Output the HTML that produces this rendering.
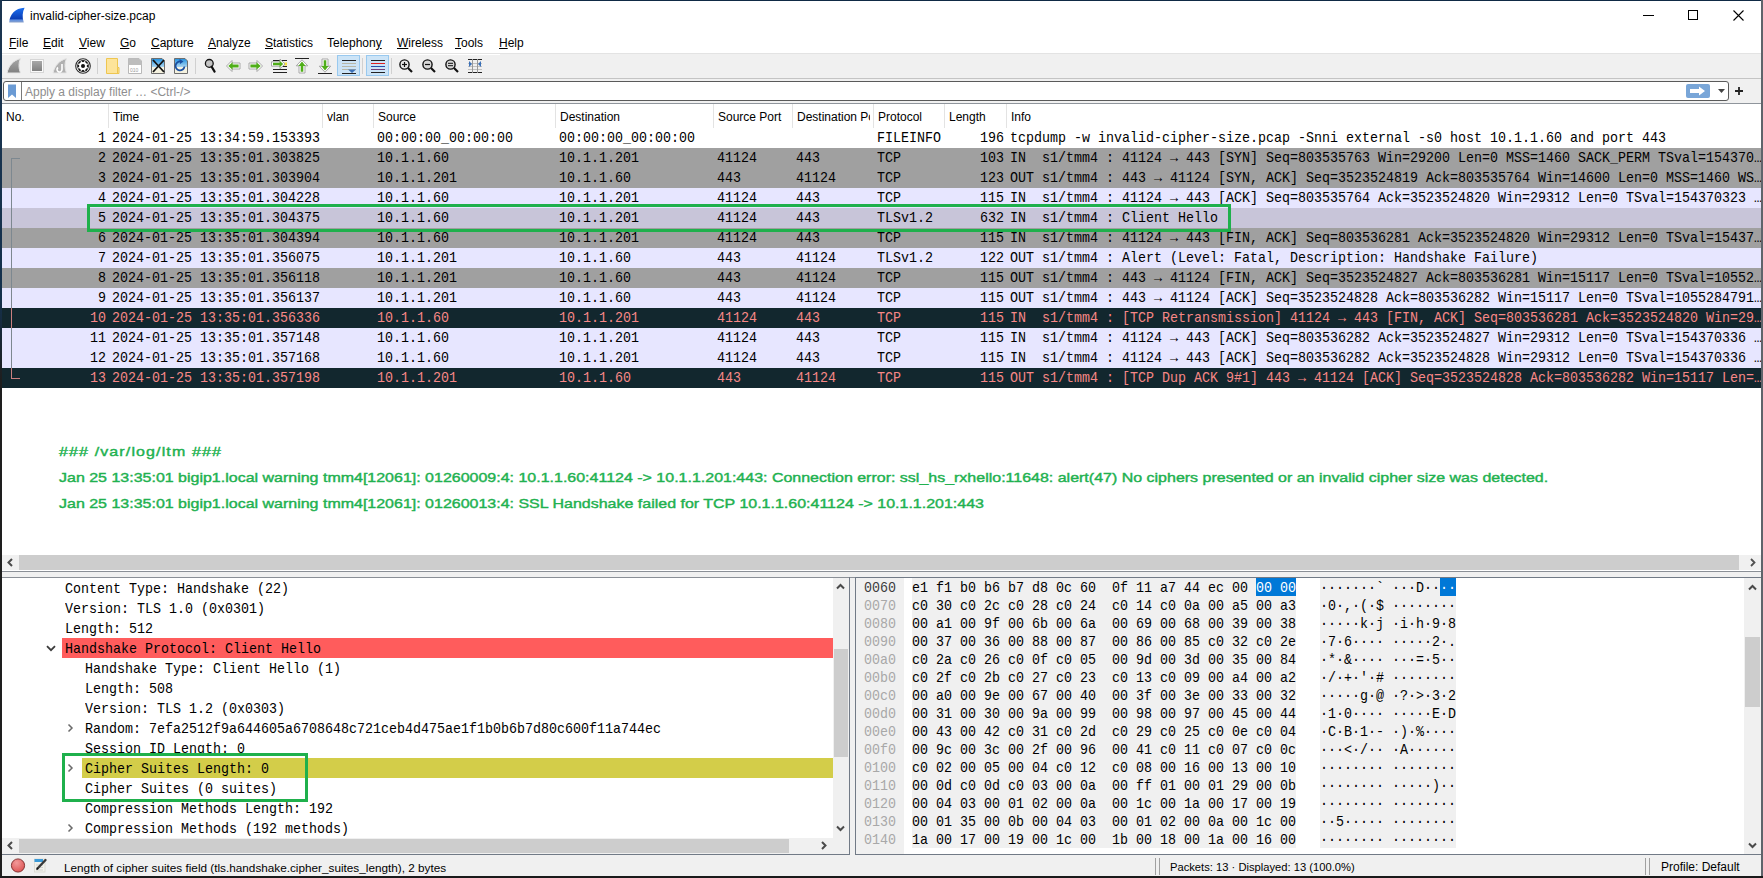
<!DOCTYPE html>
<html><head><meta charset="utf-8">
<style>
*{margin:0;padding:0;box-sizing:border-box}
html,body{width:1763px;height:878px;overflow:hidden;background:#fff}
body{position:relative;font-family:"Liberation Sans",sans-serif;font-size:12px;color:#000}
.a{position:absolute}
.m{font-family:"Liberation Mono",monospace;font-size:15px;white-space:pre;transform:scaleX(0.88889);transform-origin:0 0}
.s{font-family:"Liberation Sans",sans-serif;font-size:12px;white-space:pre}
#bl{left:0;top:0;width:2px;height:878px;background:linear-gradient(#1b3550 0,#14304c 300px,#1e1e1e 380px,#1e1e1e 878px)}
#br{left:1761px;top:0;width:2px;height:878px;background:#5f646b}
#bt{left:0;top:0;width:1763px;height:1px;background:#0f2a45}
#bb{left:0;top:876px;width:1763px;height:2px;background:#1a1a1a}
/* menu */
.mi{top:35px;height:16px;line-height:16px}
.mi u{text-decoration:underline;text-underline-offset:1px}
#tb{left:2px;top:53px;width:1759px;height:26px;background:#f0f0f0;border-top:1px solid #e3e3e3;border-bottom:1px solid #c4c4c4}
#fb{left:2px;top:79px;width:1759px;height:24px;background:#f0f0f0}
/* packet list */
#pl{left:2px;top:103px;width:1759px;height:452px;background:#fff;border-top:1px solid #8f959c}
.hd{top:105px;height:23px;line-height:23px;padding-top:1px}
.hsep{top:104px;width:1px;height:24px;background:#e3e3e3}
.row{left:2px;width:1759px;height:20px}
.rt{height:20px;line-height:20px;top:0;margin-top:1px}
.gry{background:#a0a0a0}
.lav{background:#e7e6ff}
.sel{background:#c8c5d9}
.drk{background:#12272e;color:#f78787}
.drk .rt{color:#f78787}
.dt .rt{margin-top:2px}
.hx{height:18px;line-height:18px;color:#000;margin-top:2px}
.lg{font-family:"Liberation Sans",sans-serif;font-weight:normal;-webkit-text-stroke:0.4px #21b14f;font-size:13px;color:#21b14f;white-space:pre;line-height:16px}
</style></head><body>
<div class="a" id="bt"></div>
<!-- title -->
<svg class="a" style="left:0;top:0" width="30" height="30" viewBox="0 0 30 30">
<defs><linearGradient id="sg" x1="0" y1="0" x2="0" y2="1"><stop offset="0" stop-color="#1a6ff0"/><stop offset="0.75" stop-color="#0a3db5"/><stop offset="0.82" stop-color="#5f8fe0"/><stop offset="1" stop-color="#8aa0c8"/></linearGradient></defs>
<path d="M9.2 22.6 C9.6 14.5 15 8.2 24.6 7.8 C22.4 12 22 17 23.8 22.6 Z" fill="url(#sg)"/>
</svg>
<div class="a s" style="left:30px;top:8px;line-height:16px">invalid-cipher-size.pcap</div>
<div class="a" style="left:1643px;top:15px;width:11px;height:1px;background:#000"></div>
<div class="a" style="left:1688px;top:10px;width:10px;height:10px;border:1px solid #000"></div>
<svg class="a" style="left:1733px;top:10px" width="11" height="11" viewBox="0 0 11 11"><path d="M0.5 0.5L10.5 10.5M10.5 0.5L0.5 10.5" stroke="#000" stroke-width="1.1"/></svg>
<!-- menu -->
<div class="a s mi" style="left:9px"><u>F</u>ile</div>
<div class="a s mi" style="left:43px"><u>E</u>dit</div>
<div class="a s mi" style="left:79px"><u>V</u>iew</div>
<div class="a s mi" style="left:120px"><u>G</u>o</div>
<div class="a s mi" style="left:151px"><u>C</u>apture</div>
<div class="a s mi" style="left:208px"><u>A</u>nalyze</div>
<div class="a s mi" style="left:265px"><u>S</u>tatistics</div>
<div class="a s mi" style="left:327px">Telephon<u>y</u></div>
<div class="a s mi" style="left:397px"><u>W</u>ireless</div>
<div class="a s mi" style="left:455px"><u>T</u>ools</div>
<div class="a s mi" style="left:499px"><u>H</u>elp</div>
<div class="a" id="tb"></div>
<!--TOOLBAR-->
<svg class="a" style="left:0;top:52px" width="500" height="27" viewBox="0 52 500 27">
<defs>
<linearGradient id="gg" x1="0" y1="0" x2="0" y2="1"><stop offset="0" stop-color="#a8a8a8"/><stop offset="1" stop-color="#808080"/></linearGradient>
<linearGradient id="bg1" x1="0" y1="0" x2="0" y2="1"><stop offset="0" stop-color="#1d8fe0"/><stop offset="0.55" stop-color="#a8d4f0"/><stop offset="0.6" stop-color="#f6f4e4"/><stop offset="1" stop-color="#f3f0dc"/></linearGradient>
</defs>
<line x1="2" y1="54.5" x2="500" y2="54.5" stroke="#fff" stroke-width="1"/>
<!-- 1 shark fin disabled -->
<path d="M7 73 C8.5 66 13 60.5 20.5 58.5 C18.5 63 18.5 68 20.5 73 Z" fill="url(#gg)" stroke="#e6e6e6" stroke-width="1"/>
<!-- 2 stop -->
<rect x="30.5" y="59.5" width="13" height="13" fill="#fafafa" stroke="#d6d6d6"/>
<rect x="32" y="61" width="10" height="10" fill="url(#gg)"/>
<!-- 3 restart -->
<path d="M53 73 C54.5 66 59 60.5 66.5 58.5 C64.5 63 64.5 68 66.5 73 Z" fill="#b0b0b0" stroke="#e6e6e6" stroke-width="1"/>
<path d="M62 64 L62 69.5 A2.5 2.5 0 1 1 58 67.5" fill="none" stroke="#fff" stroke-width="1.6"/>
<!-- 4 gear -->
<circle cx="83" cy="66" r="7.3" fill="#fff" stroke="#2a2a2a" stroke-width="1.1"/>
<circle cx="83" cy="66" r="5.9" fill="#151515"/>
<circle cx="83" cy="66" r="3.9" fill="#fff"/>
<rect x="82.2" y="61.0" width="1.6" height="2" fill="#fff" transform="rotate(22.5 83 66)"/><rect x="82.2" y="61.0" width="1.6" height="2" fill="#fff" transform="rotate(67.5 83 66)"/><rect x="82.2" y="61.0" width="1.6" height="2" fill="#fff" transform="rotate(112.5 83 66)"/><rect x="82.2" y="61.0" width="1.6" height="2" fill="#fff" transform="rotate(157.5 83 66)"/><rect x="82.2" y="61.0" width="1.6" height="2" fill="#fff" transform="rotate(202.5 83 66)"/><rect x="82.2" y="61.0" width="1.6" height="2" fill="#fff" transform="rotate(247.5 83 66)"/><rect x="82.2" y="61.0" width="1.6" height="2" fill="#fff" transform="rotate(292.5 83 66)"/><rect x="82.2" y="61.0" width="1.6" height="2" fill="#fff" transform="rotate(337.5 83 66)"/>
<circle cx="83" cy="66" r="2.0" fill="#111"/>
<line x1="97.5" y1="58" x2="97.5" y2="74" stroke="#d0d0d0"/>
<!-- 6 folder -->
<path d="M106.5 58.5 H117.5 V67.5 H119 V73.5 H106.5 Z" fill="#fde49a" stroke="#eec650" stroke-width="1"/>
<line x1="117.5" y1="67.5" x2="117.5" y2="73.5" stroke="#eec650"/>
<!-- 7 save disabled -->
<path d="M128.5 58.5 H139 L141.5 61 V73.5 H128.5 Z" fill="#fff" stroke="#b8b8b8"/>
<path d="M128.5 58.5 H139 L141.5 61 V65 H128.5 Z" fill="#bdbdbd"/>
<text x="130" y="71.5" font-family="Liberation Sans" font-size="5" fill="#9a9a9a">010</text>
<!-- 8 close -->
<path d="M151.5 58.5 H162 L164.5 61 V73.5 H151.5 Z" fill="url(#bg1)" stroke="#6e6e6e"/>
<path d="M153 60 L164 72 M164 60 L153 72" stroke="#111" stroke-width="1.8"/>
<!-- 9 reload -->
<path d="M174.5 58.5 H185 L187.5 61 V73.5 H174.5 Z" fill="url(#bg1)" stroke="#6e6e6e"/>
<path d="M184.5 66.5 A4.5 4.5 0 1 1 181 61.5" fill="none" stroke="#1a4ea0" stroke-width="1.8"/>
<path d="M179.5 59 L183.5 61.5 L180 64 Z" fill="#1a4ea0"/>
<line x1="195.5" y1="58" x2="195.5" y2="74" stroke="#d0d0d0"/>
<!-- 11 find -->
<circle cx="209.3" cy="63.4" r="3.9" fill="#c4c4c4" stroke="#111" stroke-width="1.3"/>
<line x1="211.6" y1="66.6" x2="214.6" y2="71.6" stroke="#111" stroke-width="2.2" stroke-linecap="round"/>
<!-- 12 back -->
<path d="M226.5 66 L232 60.5 V63 H240 V69 H232 V71.5 Z" fill="#fff" stroke="#a8a8a8" stroke-width="1"/>
<path d="M228.3 66 L232.6 62.2 V64.5 H238.6 V67.5 H232.6 V69.8 Z" fill="#4fae18"/>
<!-- 13 fwd -->
<path d="M262.5 66 L257 60.5 V63 H249 V69 H257 V71.5 Z" fill="#fff" stroke="#a8a8a8" stroke-width="1"/>
<path d="M260.7 66 L256.4 62.2 V64.5 H250.4 V67.5 H256.4 V69.8 Z" fill="#4fae18"/>
<!-- 14 goto -->
<g stroke="#222" stroke-width="1"><line x1="273" y1="60.5" x2="287" y2="60.5"/><line x1="273" y1="69.5" x2="287" y2="69.5"/><line x1="273" y1="72.5" x2="287" y2="72.5"/><line x1="281" y1="66.5" x2="287" y2="66.5"/></g>
<rect x="284" y="62.5" width="3" height="3" fill="#f5e040"/>
<path d="M285 64 L280 59.2 V61.8 H271.5 V66.2 H280 V68.8 Z" fill="#fff" stroke="#a8a8a8" stroke-width="1"/>
<path d="M283.2 64 L279.6 60.8 V62.8 H273 V65.2 H279.6 V67.2 Z" fill="#4fae18"/>
<!-- 15 first -->
<line x1="295" y1="58.5" x2="309" y2="58.5" stroke="#222"/>
<path d="M302 59.8 L307.8 65.8 H305 V73 H299 V65.8 H296.2 Z" fill="#fff" stroke="#a8a8a8" stroke-width="1"/>
<path d="M302 61.6 L305.6 65.9 H303.3 V71.8 H300.7 V65.9 H298.4 Z" fill="#4fae18"/>
<!-- 16 last -->
<line x1="318" y1="73.5" x2="332" y2="73.5" stroke="#222"/>
<path d="M325 72.2 L330.8 66.2 H328 V59 H322 V66.2 H319.2 Z" fill="#fff" stroke="#a8a8a8" stroke-width="1"/>
<path d="M325 70.4 L328.6 66.1 H326.3 V60.2 H323.7 V66.1 H321.4 Z" fill="#4fae18"/>
<!-- 17 autoscroll -->
<rect x="337.5" y="55.5" width="22" height="20" fill="#cce4f7" stroke="#99c9ef"/>
<g stroke-width="1"><line x1="342" y1="60.5" x2="356" y2="60.5" stroke="#222"/><line x1="342" y1="63.5" x2="356" y2="63.5" stroke="#b8b8a8"/><line x1="342" y1="66.5" x2="356" y2="66.5" stroke="#b8b8a8"/><line x1="342" y1="69.5" x2="356" y2="69.5" stroke="#b8b8a8"/><line x1="342" y1="73.5" x2="356" y2="73.5" stroke="#222"/></g>
<path d="M348 69.5 H356 L352 73 Z" fill="#3a70b8"/>
<line x1="362.5" y1="58" x2="362.5" y2="74" stroke="#d0d0d0"/>
<!-- 19 colorize -->
<rect x="366.5" y="55.5" width="22" height="20" fill="#cce4f7" stroke="#99c9ef"/>
<g stroke-width="1"><line x1="371" y1="60.5" x2="385" y2="60.5" stroke="#222"/><line x1="371" y1="63.5" x2="385" y2="63.5" stroke="#e02020"/><line x1="371" y1="66.5" x2="385" y2="66.5" stroke="#2850a8"/><line x1="371" y1="69.5" x2="385" y2="69.5" stroke="#70407a"/><line x1="371" y1="72.5" x2="385" y2="72.5" stroke="#222"/></g>
<line x1="391.5" y1="58" x2="391.5" y2="74" stroke="#d0d0d0"/>
<!-- 21-23 zoom -->
<g stroke="#111"><circle cx="404.5" cy="64.5" r="4.6" fill="#e8e8e8" stroke-width="1.4"/><line x1="408" y1="68" x2="412" y2="72" stroke-width="2.2"/><line x1="402" y1="64.5" x2="407" y2="64.5" stroke-width="1.2"/><line x1="404.5" y1="62" x2="404.5" y2="67" stroke-width="1.2"/></g>
<g stroke="#111"><circle cx="427.5" cy="64.5" r="4.6" fill="#d8d8d8" stroke-width="1.4"/><line x1="431" y1="68" x2="435" y2="72" stroke-width="2.2"/><line x1="425" y1="64.5" x2="430" y2="64.5" stroke-width="1.2"/></g>
<g stroke="#111"><circle cx="450.5" cy="64.5" r="4.6" fill="#d8d8d8" stroke-width="1.4"/><line x1="454" y1="68" x2="458" y2="72" stroke-width="2.2"/><line x1="448" y1="63.3" x2="453" y2="63.3" stroke-width="1"/><line x1="448" y1="65.7" x2="453" y2="65.7" stroke-width="1"/></g>
<!-- 24 resize -->
<g stroke-width="1"><line x1="468" y1="59.5" x2="482" y2="59.5" stroke="#222"/><line x1="468" y1="72.5" x2="482" y2="72.5" stroke="#222"/><line x1="468" y1="63.5" x2="482" y2="63.5" stroke="#c0c0c0"/><line x1="468" y1="66.5" x2="482" y2="66.5" stroke="#c0c0c0"/><line x1="468" y1="69.5" x2="482" y2="69.5" stroke="#c0c0c0"/><line x1="472.5" y1="59" x2="472.5" y2="73" stroke="#999"/><line x1="477.5" y1="59" x2="477.5" y2="73" stroke="#999"/></g>
<path d="M469 61 L472 64 L469 67 Z" fill="#3a70b8"/><path d="M481 61 L478 64 L481 67 Z" fill="#3a70b8"/>
</svg>

<div class="a" id="fb"></div>
<!--FILTER-->
<div class="a" style="left:3px;top:81px;width:1726px;height:20px;background:#fff;border:1px solid #5a5a5a;border-radius:3px"></div>
<div class="a" style="left:21px;top:82px;width:1px;height:18px;background:#7a7a7a"></div>
<svg class="a" style="left:7px;top:84px" width="10" height="15" viewBox="0 0 10 15"><path d="M1 0.5 H9 V14 L5 10.5 L1 14 Z" fill="#6b9bd4"/></svg>
<div class="a s" style="left:25px;top:84px;line-height:16px;color:#8e8e8e">Apply a display filter &#8230; &lt;Ctrl-/&gt;</div>
<div class="a" style="left:1686px;top:84px;width:24px;height:14px;background:#79a6d8;border-radius:2px"></div>
<svg class="a" style="left:1689px;top:86px" width="18" height="10" viewBox="0 0 18 10"><path d="M1 3 H10 V0.5 L16 5 L10 9.5 V7 H1 Z" fill="#fff"/></svg>
<svg class="a" style="left:1718px;top:89px" width="7" height="4" viewBox="0 0 7 4"><path d="M0 0 H7 L3.5 4 Z" fill="#444"/></svg>
<svg class="a" style="left:1734px;top:86px" width="10" height="10" viewBox="0 0 10 10"><path d="M5 1 V9 M1 5 H9" stroke="#222" stroke-width="1.8"/></svg>

<div class="a" id="pl"></div>
<!--PACKETS-->
<div class="a s hd" style="left:6px">No.</div>
<div class="a s hd" style="left:113px">Time</div>
<div class="a s hd" style="left:327px">vlan</div>
<div class="a s hd" style="left:378px">Source</div>
<div class="a s hd" style="left:560px">Destination</div>
<div class="a s hd" style="left:718px">Source Port</div>
<div class="a s hd" style="left:797px;width:73px;overflow:hidden">Destination Po</div>
<div class="a s hd" style="left:878px">Protocol</div>
<div class="a s hd" style="left:949px">Length</div>
<div class="a s hd" style="left:1011px">Info</div>
<div class="a hsep" style="left:108px"></div>
<div class="a hsep" style="left:322px"></div>
<div class="a hsep" style="left:373px"></div>
<div class="a hsep" style="left:555px"></div>
<div class="a hsep" style="left:713px"></div>
<div class="a hsep" style="left:792px"></div>
<div class="a hsep" style="left:873px"></div>
<div class="a hsep" style="left:944px"></div>
<div class="a hsep" style="left:1006px"></div>

<div class="a row " style="top:128px"><div class="a m rt" style="left:96px">1</div><div class="a m rt" style="left:110px">2024-01-25 13:34:59.153393</div><div class="a m rt" style="left:375px">00:00:00_00:00:00</div><div class="a m rt" style="left:557px">00:00:00_00:00:00</div><div class="a m rt" style="left:875px">FILEINFO</div><div class="a m rt" style="left:978px">196</div><div class="a m rt" style="left:1008px">tcpdump -w invalid-cipher-size.pcap -Snni external -s0 host 10.1.1.60 and port 443</div></div>
<div class="a row gry" style="top:148px"><div class="a m rt" style="left:96px">2</div><div class="a m rt" style="left:110px">2024-01-25 13:35:01.303825</div><div class="a m rt" style="left:375px">10.1.1.60</div><div class="a m rt" style="left:557px">10.1.1.201</div><div class="a m rt" style="left:715px">41124</div><div class="a m rt" style="left:794px">443</div><div class="a m rt" style="left:875px">TCP</div><div class="a m rt" style="left:978px">103</div><div class="a m rt" style="left:1008px">IN  s1/tmm4 : 41124 → 443 [SYN] Seq=803535763 Win=29200 Len=0 MSS=1460 SACK_PERM TSval=154370…</div></div>
<div class="a row gry" style="top:168px"><div class="a m rt" style="left:96px">3</div><div class="a m rt" style="left:110px">2024-01-25 13:35:01.303904</div><div class="a m rt" style="left:375px">10.1.1.201</div><div class="a m rt" style="left:557px">10.1.1.60</div><div class="a m rt" style="left:715px">443</div><div class="a m rt" style="left:794px">41124</div><div class="a m rt" style="left:875px">TCP</div><div class="a m rt" style="left:978px">123</div><div class="a m rt" style="left:1008px">OUT s1/tmm4 : 443 → 41124 [SYN, ACK] Seq=3523524819 Ack=803535764 Win=14600 Len=0 MSS=1460 WS…</div></div>
<div class="a row lav" style="top:188px"><div class="a m rt" style="left:96px">4</div><div class="a m rt" style="left:110px">2024-01-25 13:35:01.304228</div><div class="a m rt" style="left:375px">10.1.1.60</div><div class="a m rt" style="left:557px">10.1.1.201</div><div class="a m rt" style="left:715px">41124</div><div class="a m rt" style="left:794px">443</div><div class="a m rt" style="left:875px">TCP</div><div class="a m rt" style="left:978px">115</div><div class="a m rt" style="left:1008px">IN  s1/tmm4 : 41124 → 443 [ACK] Seq=803535764 Ack=3523524820 Win=29312 Len=0 TSval=154370323 …</div></div>
<div class="a row sel" style="top:208px"><div class="a m rt" style="left:96px">5</div><div class="a m rt" style="left:110px">2024-01-25 13:35:01.304375</div><div class="a m rt" style="left:375px">10.1.1.60</div><div class="a m rt" style="left:557px">10.1.1.201</div><div class="a m rt" style="left:715px">41124</div><div class="a m rt" style="left:794px">443</div><div class="a m rt" style="left:875px">TLSv1.2</div><div class="a m rt" style="left:978px">632</div><div class="a m rt" style="left:1008px">IN  s1/tmm4 : Client Hello</div></div>
<div class="a row gry" style="top:228px"><div class="a m rt" style="left:96px">6</div><div class="a m rt" style="left:110px">2024-01-25 13:35:01.304394</div><div class="a m rt" style="left:375px">10.1.1.60</div><div class="a m rt" style="left:557px">10.1.1.201</div><div class="a m rt" style="left:715px">41124</div><div class="a m rt" style="left:794px">443</div><div class="a m rt" style="left:875px">TCP</div><div class="a m rt" style="left:978px">115</div><div class="a m rt" style="left:1008px">IN  s1/tmm4 : 41124 → 443 [FIN, ACK] Seq=803536281 Ack=3523524820 Win=29312 Len=0 TSval=15437…</div></div>
<div class="a row lav" style="top:248px"><div class="a m rt" style="left:96px">7</div><div class="a m rt" style="left:110px">2024-01-25 13:35:01.356075</div><div class="a m rt" style="left:375px">10.1.1.201</div><div class="a m rt" style="left:557px">10.1.1.60</div><div class="a m rt" style="left:715px">443</div><div class="a m rt" style="left:794px">41124</div><div class="a m rt" style="left:875px">TLSv1.2</div><div class="a m rt" style="left:978px">122</div><div class="a m rt" style="left:1008px">OUT s1/tmm4 : Alert (Level: Fatal, Description: Handshake Failure)</div></div>
<div class="a row gry" style="top:268px"><div class="a m rt" style="left:96px">8</div><div class="a m rt" style="left:110px">2024-01-25 13:35:01.356118</div><div class="a m rt" style="left:375px">10.1.1.201</div><div class="a m rt" style="left:557px">10.1.1.60</div><div class="a m rt" style="left:715px">443</div><div class="a m rt" style="left:794px">41124</div><div class="a m rt" style="left:875px">TCP</div><div class="a m rt" style="left:978px">115</div><div class="a m rt" style="left:1008px">OUT s1/tmm4 : 443 → 41124 [FIN, ACK] Seq=3523524827 Ack=803536281 Win=15117 Len=0 TSval=10552…</div></div>
<div class="a row lav" style="top:288px"><div class="a m rt" style="left:96px">9</div><div class="a m rt" style="left:110px">2024-01-25 13:35:01.356137</div><div class="a m rt" style="left:375px">10.1.1.201</div><div class="a m rt" style="left:557px">10.1.1.60</div><div class="a m rt" style="left:715px">443</div><div class="a m rt" style="left:794px">41124</div><div class="a m rt" style="left:875px">TCP</div><div class="a m rt" style="left:978px">115</div><div class="a m rt" style="left:1008px">OUT s1/tmm4 : 443 → 41124 [ACK] Seq=3523524828 Ack=803536282 Win=15117 Len=0 TSval=1055284791…</div></div>
<div class="a row drk" style="top:308px"><div class="a m rt" style="left:88px">10</div><div class="a m rt" style="left:110px">2024-01-25 13:35:01.356336</div><div class="a m rt" style="left:375px">10.1.1.60</div><div class="a m rt" style="left:557px">10.1.1.201</div><div class="a m rt" style="left:715px">41124</div><div class="a m rt" style="left:794px">443</div><div class="a m rt" style="left:875px">TCP</div><div class="a m rt" style="left:978px">115</div><div class="a m rt" style="left:1008px">IN  s1/tmm4 : [TCP Retransmission] 41124 → 443 [FIN, ACK] Seq=803536281 Ack=3523524820 Win=29…</div></div>
<div class="a row lav" style="top:328px"><div class="a m rt" style="left:88px">11</div><div class="a m rt" style="left:110px">2024-01-25 13:35:01.357148</div><div class="a m rt" style="left:375px">10.1.1.60</div><div class="a m rt" style="left:557px">10.1.1.201</div><div class="a m rt" style="left:715px">41124</div><div class="a m rt" style="left:794px">443</div><div class="a m rt" style="left:875px">TCP</div><div class="a m rt" style="left:978px">115</div><div class="a m rt" style="left:1008px">IN  s1/tmm4 : 41124 → 443 [ACK] Seq=803536282 Ack=3523524827 Win=29312 Len=0 TSval=154370336 …</div></div>
<div class="a row lav" style="top:348px"><div class="a m rt" style="left:88px">12</div><div class="a m rt" style="left:110px">2024-01-25 13:35:01.357168</div><div class="a m rt" style="left:375px">10.1.1.60</div><div class="a m rt" style="left:557px">10.1.1.201</div><div class="a m rt" style="left:715px">41124</div><div class="a m rt" style="left:794px">443</div><div class="a m rt" style="left:875px">TCP</div><div class="a m rt" style="left:978px">115</div><div class="a m rt" style="left:1008px">IN  s1/tmm4 : 41124 → 443 [ACK] Seq=803536282 Ack=3523524828 Win=29312 Len=0 TSval=154370336 …</div></div>
<div class="a row drk" style="top:368px"><div class="a m rt" style="left:88px">13</div><div class="a m rt" style="left:110px">2024-01-25 13:35:01.357198</div><div class="a m rt" style="left:375px">10.1.1.201</div><div class="a m rt" style="left:557px">10.1.1.60</div><div class="a m rt" style="left:715px">443</div><div class="a m rt" style="left:794px">41124</div><div class="a m rt" style="left:875px">TCP</div><div class="a m rt" style="left:978px">115</div><div class="a m rt" style="left:1008px">OUT s1/tmm4 : [TCP Dup ACK 9#1] 443 → 41124 [ACK] Seq=3523524828 Ack=803536282 Win=15117 Len=…</div></div>
<div class="a lg" style="left:59px;top:444px;letter-spacing:0.92px;transform:scaleX(1.2296);transform-origin:0 0">### /var/log/ltm ###</div>
<div class="a lg" style="left:59px;top:470px;transform:scaleX(1.2296);transform-origin:0 0">Jan 25 13:35:01 bigip1.local warning tmm4[12061]: 01260009:4: 10.1.1.60:41124 -&gt; 10.1.1.201:443: Connection error: ssl_hs_rxhello:11648: alert(47) No ciphers presented or an invalid cipher size was detected.</div>
<div class="a lg" style="left:59px;top:495.8px;transform:scaleX(1.2296);transform-origin:0 0">Jan 25 13:35:01 bigip1.local warning tmm4[12061]: 01260013:4: SSL Handshake failed for TCP 10.1.1.60:41124 -&gt; 10.1.1.201:443</div>
<div class="a" style="left:2px;top:555px;width:1759px;height:15px;background:#f0f0f0"></div>
<div class="a" style="left:19px;top:555px;width:1720px;height:15px;background:#cdcdcd"></div>
<svg class="a" style="left:6px;top:558px" width="8" height="9" viewBox="0 0 8 9"><path d="M6 1 L2.5 4.5 L6 8" fill="none" stroke="#4a4a4a" stroke-width="2"/></svg>
<svg class="a" style="left:1749px;top:558px" width="8" height="9" viewBox="0 0 8 9"><path d="M2 1 L5.5 4.5 L2 8" fill="none" stroke="#505050" stroke-width="1.8"/></svg>
<div class="a" style="left:2px;top:571px;width:1759px;height:7px;background:#f0f0f0;border-top:1px solid #8a8f96;border-bottom:1px solid #8a8f96"></div>
<!-- green box in packet list -->
<div class="a" style="left:87px;top:204px;width:1144px;height:28px;border:3px solid #1fb04c"></div>
<div class="a" style="left:11px;top:158px;width:9px;height:1px;background:#7d8890"></div>
<div class="a" style="left:11px;top:158px;width:1px;height:150px;background:#7d8890"></div>
<div class="a" style="left:11px;top:308px;width:1px;height:20px;background:#c98080"></div>
<div class="a" style="left:11px;top:328px;width:1px;height:40px;background:#7d8890"></div>
<div class="a" style="left:11px;top:368px;width:1px;height:11px;background:#c98080"></div>
<div class="a" style="left:11px;top:378px;width:9px;height:1px;background:#c98080"></div>
<!--DETAILS-->
<div class="a dt" style="left:2px;top:578px;width:831px;height:260px;background:#fff;overflow:hidden">
<div class="a m rt" style="left:63px;top:0px">Content Type: Handshake (22)</div>
<div class="a m rt" style="left:63px;top:20px">Version: TLS 1.0 (0x0301)</div>
<div class="a m rt" style="left:63px;top:40px">Length: 512</div>
<div class="a" style="left:60px;top:60px;width:771px;height:20px;background:#ff5c5c"></div>
<svg class="a" style="left:44px;top:66.5px" width="10" height="7" viewBox="0 0 10 7"><path d="M1 1.2 L5 5.2 L9 1.2" fill="none" stroke="#3c3c3c" stroke-width="1.8"/></svg>
<div class="a m rt" style="left:63px;top:60px">Handshake Protocol: Client Hello</div>
<div class="a m rt" style="left:83px;top:80px">Handshake Type: Client Hello (1)</div>
<div class="a m rt" style="left:83px;top:100px">Length: 508</div>
<div class="a m rt" style="left:83px;top:120px">Version: TLS 1.2 (0x0303)</div>
<svg class="a" style="left:65px;top:145px" width="8" height="10" viewBox="0 0 8 10"><path d="M1.5 1.5 L5 5 L1.5 8.5" fill="none" stroke="#6a6a6a" stroke-width="1.5"/></svg>
<div class="a m rt" style="left:83px;top:140px">Random: 7efa2512f9a644605a6708648c721ceb4d475ae1f1b0b6b7d80c600f11a744ec</div>
<div class="a m rt" style="left:83px;top:160px">Session ID Length: 0</div>
<div class="a" style="left:80px;top:180px;width:751px;height:20px;background:#d3cd49"></div>
<svg class="a" style="left:65px;top:185px" width="8" height="10" viewBox="0 0 8 10"><path d="M1.5 1.5 L5 5 L1.5 8.5" fill="none" stroke="#6a6a6a" stroke-width="1.5"/></svg>
<div class="a m rt" style="left:83px;top:180px">Cipher Suites Length: 0</div>
<div class="a m rt" style="left:83px;top:200px">Cipher Suites (0 suites)</div>
<div class="a m rt" style="left:83px;top:220px">Compression Methods Length: 192</div>
<svg class="a" style="left:65px;top:245px" width="8" height="10" viewBox="0 0 8 10"><path d="M1.5 1.5 L5 5 L1.5 8.5" fill="none" stroke="#6a6a6a" stroke-width="1.5"/></svg>
<div class="a m rt" style="left:83px;top:240px">Compression Methods (192 methods)</div>
</div>
<div class="a" style="left:62px;top:753px;width:246px;height:49px;border:3px solid #1fb04c"></div>
<div class="a" style="left:833px;top:578px;width:16px;height:260px;background:#f0f0f0"></div>
<div class="a" style="left:834px;top:649px;width:14px;height:108px;background:#cdcdcd"></div>
<svg class="a" style="left:836px;top:583px" width="9" height="7" viewBox="0 0 9 7"><path d="M1 5.5 L4.5 2 L8 5.5" fill="none" stroke="#4a4a4a" stroke-width="2"/></svg>
<svg class="a" style="left:836px;top:825px" width="9" height="7" viewBox="0 0 9 7"><path d="M1 1.5 L4.5 5 L8 1.5" fill="none" stroke="#4a4a4a" stroke-width="2"/></svg>
<div class="a" style="left:2px;top:838px;width:847px;height:16px;background:#f0f0f0"></div>
<div class="a" style="left:19px;top:839px;width:770px;height:14px;background:#cdcdcd"></div>
<svg class="a" style="left:6px;top:841px" width="8" height="9" viewBox="0 0 8 9"><path d="M6 1 L2.5 4.5 L6 8" fill="none" stroke="#4a4a4a" stroke-width="2"/></svg>
<svg class="a" style="left:820px;top:841px" width="8" height="9" viewBox="0 0 8 9"><path d="M2 1 L5.5 4.5 L2 8" fill="none" stroke="#4a4a4a" stroke-width="2"/></svg>
<div class="a" style="left:849px;top:577px;width:1px;height:278px;background:#717a86"></div>
<div class="a" style="left:2px;top:854px;width:848px;height:1px;background:#717a86"></div>
<div class="a" style="left:850px;top:578px;width:5px;height:277px;background:#f0f0f0"></div>

<!--BYTES-->
<div class="a" style="left:855px;top:577px;width:906px;height:278px;background:#fff;border:1px solid #717a86;border-right:none;overflow:hidden">
<div class="a" style="left:0;top:0;width:48px;height:276px;background:#f0f0f0"></div>
<div class="a" style="left:56px;top:0;width:384px;height:270px;background:#f0f0f0"></div>
<div class="a" style="left:464px;top:0;width:136px;height:270px;background:#f0f0f0"></div>
<div class="a" style="left:400px;top:0;width:40px;height:18px;background:#0078d7"></div>
<div class="a" style="left:584px;top:0;width:16px;height:18px;background:#0078d7"></div>
<div class="a m hx" style="left:8px;top:0px;color:#3c3c3c">0060</div>
<div class="a m hx" style="left:56px;top:0px">e1 f1 b0 b6 b7 d8 0c 60  0f 11 a7 44 ec 00 <span style="color:#fff">00 00</span></div>
<div class="a m hx" style="left:464px;top:0px">·······` ···D··<span style="color:#fff">··</span></div>
<div class="a m hx" style="left:8px;top:18px;color:#a8a8a8">0070</div>
<div class="a m hx" style="left:56px;top:18px">c0 30 c0 2c c0 28 c0 24  c0 14 c0 0a 00 a5 00 a3</div>
<div class="a m hx" style="left:464px;top:18px">·0·,·(·$ ········</div>
<div class="a m hx" style="left:8px;top:36px;color:#a8a8a8">0080</div>
<div class="a m hx" style="left:56px;top:36px">00 a1 00 9f 00 6b 00 6a  00 69 00 68 00 39 00 38</div>
<div class="a m hx" style="left:464px;top:36px">·····k·j ·i·h·9·8</div>
<div class="a m hx" style="left:8px;top:54px;color:#a8a8a8">0090</div>
<div class="a m hx" style="left:56px;top:54px">00 37 00 36 00 88 00 87  00 86 00 85 c0 32 c0 2e</div>
<div class="a m hx" style="left:464px;top:54px">·7·6···· ·····2·.</div>
<div class="a m hx" style="left:8px;top:72px;color:#a8a8a8">00a0</div>
<div class="a m hx" style="left:56px;top:72px">c0 2a c0 26 c0 0f c0 05  00 9d 00 3d 00 35 00 84</div>
<div class="a m hx" style="left:464px;top:72px">·*·&amp;···· ···=·5··</div>
<div class="a m hx" style="left:8px;top:90px;color:#a8a8a8">00b0</div>
<div class="a m hx" style="left:56px;top:90px">c0 2f c0 2b c0 27 c0 23  c0 13 c0 09 00 a4 00 a2</div>
<div class="a m hx" style="left:464px;top:90px">·/·+·&#x27;·# ········</div>
<div class="a m hx" style="left:8px;top:108px;color:#a8a8a8">00c0</div>
<div class="a m hx" style="left:56px;top:108px">00 a0 00 9e 00 67 00 40  00 3f 00 3e 00 33 00 32</div>
<div class="a m hx" style="left:464px;top:108px">·····g·@ ·?·&gt;·3·2</div>
<div class="a m hx" style="left:8px;top:126px;color:#a8a8a8">00d0</div>
<div class="a m hx" style="left:56px;top:126px">00 31 00 30 00 9a 00 99  00 98 00 97 00 45 00 44</div>
<div class="a m hx" style="left:464px;top:126px">·1·0···· ·····E·D</div>
<div class="a m hx" style="left:8px;top:144px;color:#a8a8a8">00e0</div>
<div class="a m hx" style="left:56px;top:144px">00 43 00 42 c0 31 c0 2d  c0 29 c0 25 c0 0e c0 04</div>
<div class="a m hx" style="left:464px;top:144px">·C·B·1·- ·)·%····</div>
<div class="a m hx" style="left:8px;top:162px;color:#a8a8a8">00f0</div>
<div class="a m hx" style="left:56px;top:162px">00 9c 00 3c 00 2f 00 96  00 41 c0 11 c0 07 c0 0c</div>
<div class="a m hx" style="left:464px;top:162px">···&lt;·/·· ·A······</div>
<div class="a m hx" style="left:8px;top:180px;color:#a8a8a8">0100</div>
<div class="a m hx" style="left:56px;top:180px">c0 02 00 05 00 04 c0 12  c0 08 00 16 00 13 00 10</div>
<div class="a m hx" style="left:464px;top:180px">········ ········</div>
<div class="a m hx" style="left:8px;top:198px;color:#a8a8a8">0110</div>
<div class="a m hx" style="left:56px;top:198px">00 0d c0 0d c0 03 00 0a  00 ff 01 00 01 29 00 0b</div>
<div class="a m hx" style="left:464px;top:198px">········ ·····)··</div>
<div class="a m hx" style="left:8px;top:216px;color:#a8a8a8">0120</div>
<div class="a m hx" style="left:56px;top:216px">00 04 03 00 01 02 00 0a  00 1c 00 1a 00 17 00 19</div>
<div class="a m hx" style="left:464px;top:216px">········ ········</div>
<div class="a m hx" style="left:8px;top:234px;color:#a8a8a8">0130</div>
<div class="a m hx" style="left:56px;top:234px">00 01 35 00 0b 00 04 03  00 01 02 00 0a 00 1c 00</div>
<div class="a m hx" style="left:464px;top:234px">··5····· ········</div>
<div class="a m hx" style="left:8px;top:252px;color:#a8a8a8">0140</div>
<div class="a m hx" style="left:56px;top:252px">1a 00 17 00 19 00 1c 00  1b 00 18 00 1a 00 16 00</div>
<div class="a m hx" style="left:464px;top:252px">········ ········</div>
<div class="a" style="left:888px;top:0;width:17px;height:276px;background:#f0f0f0"></div>
<div class="a" style="left:889px;top:59px;width:15px;height:70px;background:#cdcdcd"></div>
<svg class="a" style="left:892px;top:6px" width="9" height="7" viewBox="0 0 9 7"><path d="M1 5.5 L4.5 2 L8 5.5" fill="none" stroke="#4a4a4a" stroke-width="2"/></svg>
<svg class="a" style="left:892px;top:264px" width="9" height="7" viewBox="0 0 9 7"><path d="M1 1.5 L4.5 5 L8 1.5" fill="none" stroke="#4a4a4a" stroke-width="2"/></svg>
</div>

<!--STATUS-->
<div class="a" style="left:1756px;top:865px;width:2px;height:2px;background:#b8b8b8"></div><div class="a" style="left:1752px;top:869px;width:2px;height:2px;background:#b8b8b8"></div><div class="a" style="left:1756px;top:869px;width:2px;height:2px;background:#b8b8b8"></div><div class="a" style="left:1748px;top:873px;width:2px;height:2px;background:#b8b8b8"></div><div class="a" style="left:1752px;top:873px;width:2px;height:2px;background:#b8b8b8"></div><div class="a" style="left:1756px;top:873px;width:2px;height:2px;background:#b8b8b8"></div>
<div class="a" style="left:2px;top:855px;width:1759px;height:21px;background:#f0f0f0"></div>
<svg class="a" style="left:10px;top:858px" width="16" height="16" viewBox="0 0 16 16"><defs><radialGradient id="rg" cx="0.4" cy="0.3" r="0.75"><stop offset="0" stop-color="#f29a9a"/><stop offset="1" stop-color="#dc5252"/></radialGradient></defs><circle cx="8" cy="7.5" r="6.6" fill="url(#rg)" stroke="#7a2a2a" stroke-width="0.9"/></svg>
<svg class="a" style="left:33px;top:858px" width="16" height="15" viewBox="0 0 16 15"><rect x="1.5" y="1" width="10.5" height="13" fill="#f2f2ec" stroke="#d8d8d0" stroke-width="0.8"/><rect x="1.5" y="1" width="8.5" height="3" fill="#3a9ad8"/><g stroke="#c8c8c8" stroke-width="0.8"><line x1="3" y1="7" x2="10" y2="7"/><line x1="3" y1="9.5" x2="10" y2="9.5"/><line x1="3" y1="12" x2="10" y2="12"/></g><path d="M4.5 10.5 L12.5 2" stroke="#3a3a3a" stroke-width="2.4" stroke-linecap="round"/><path d="M3.6 11.6 L5 10" stroke="#111" stroke-width="1.2"/></svg>
<div class="a s" style="left:64px;top:860px;line-height:15px;font-size:11.75px">Length of cipher suites field (tls.handshake.cipher_suites_length), 2 bytes</div>
<div class="a" style="left:1155px;top:858px;width:1px;height:17px;background:#a0a0a0"></div>
<div class="a" style="left:1159px;top:858px;width:1px;height:17px;background:#a0a0a0"></div>
<div class="a s" style="left:1170px;top:860px;line-height:15px;font-size:11.2px">Packets: 13 · Displayed: 13 (100.0%)</div>
<div class="a" style="left:1645px;top:858px;width:1px;height:17px;background:#a0a0a0"></div>
<div class="a" style="left:1649px;top:858px;width:1px;height:17px;background:#a0a0a0"></div>
<div class="a s" style="left:1661px;top:860px;line-height:15px">Profile: Default</div>

<div class="a" id="bl"></div>
<div class="a" id="br"></div>
<div class="a" id="bb"></div>
</body></html>
